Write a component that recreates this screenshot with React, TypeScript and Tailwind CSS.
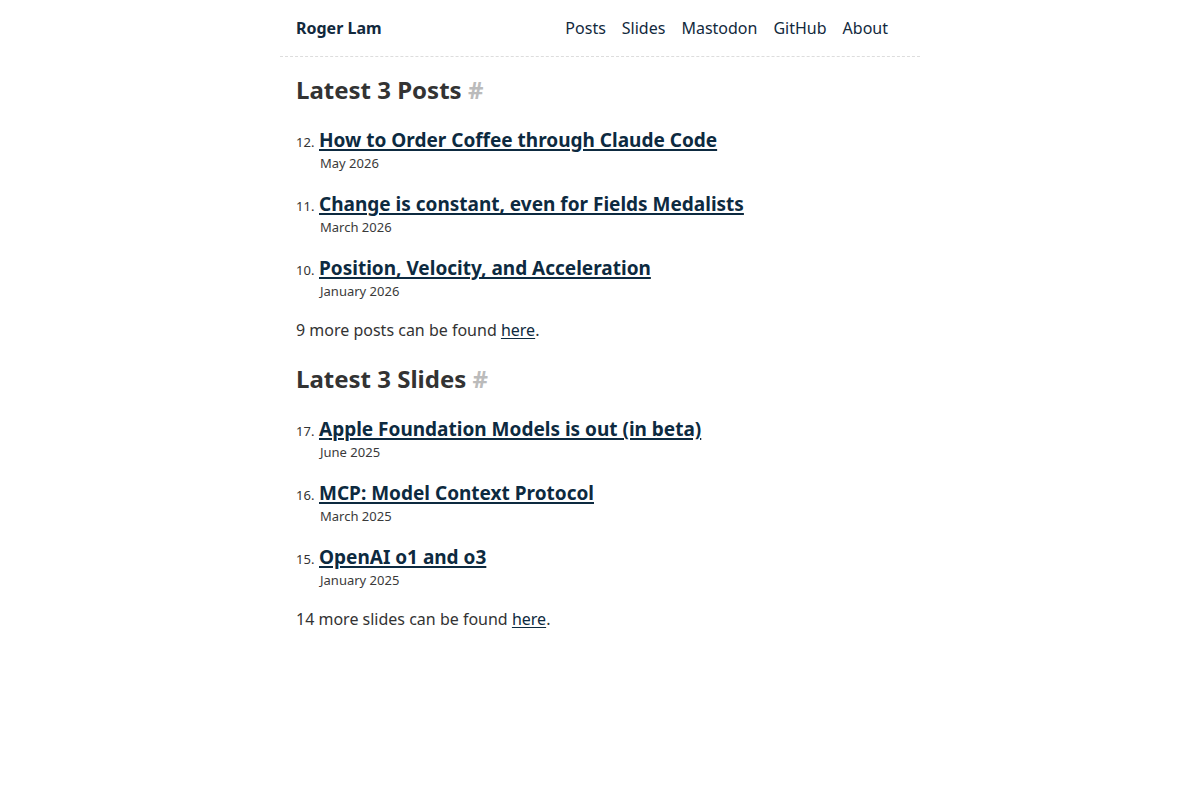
import React from "react";

type Entry = { n: number; title: string; date: string };

const posts: Entry[] = [
  { n: 12, title: "How to Order Coffee through Claude Code", date: "May 2026" },
  { n: 11, title: "Change is constant, even for Fields Medalists", date: "March 2026" },
  { n: 10, title: "Position, Velocity, and Acceleration", date: "January 2026" },
];

const slides: Entry[] = [
  { n: 17, title: "Apple Foundation Models is out (in beta)", date: "June 2025" },
  { n: 16, title: "MCP: Model Context Protocol", date: "March 2025" },
  { n: 15, title: "OpenAI o1 and o3", date: "January 2025" },
];

function Section({ title, items, more }: { title: string; items: Entry[]; more: string }) {
  return (
    <section>
      <h2 className="text-[24px] leading-[32px] font-bold text-[#333333] pt-[17px]">
        {title} <a href="#" className="text-[#bbbbbb] font-bold">#</a>
      </h2>
      <ol className="mt-[20px] flex flex-col gap-[18px]">
        {items.map((e) => (
          <li key={e.n} className="flex flex-col">
            <div className="flex items-baseline">
              <span className="text-[13px] text-[#333333] w-[23px]">{e.n}.</span>
              <a href="#" className="text-[19px] leading-[28px] font-bold text-[#0d2a40] underline underline-offset-[2px] decoration-[1.5px]">
                {e.title}
              </a>
            </div>
            <span className="text-[13px] leading-[18px] text-[#3a3a3a] pl-[24px]">{e.date}</span>
          </li>
        ))}
      </ol>
      <p className="mt-[18px] mb-[4px] text-[16px] leading-[24px] text-[#333333]">
        {more} <a href="#" className="text-[#0d2a40] underline underline-offset-[2px]">here</a>.
      </p>
    </section>
  );
}

export default function App() {
  return (
    <div className="min-h-screen bg-white" style={{ fontFamily: '"Noto Sans", "Open Sans", sans-serif' }}>
      <div className="w-[640px] mx-auto">
        <header className="h-[57px] pl-[16px] pr-[32px] flex items-center justify-between border-b border-dashed border-[#dddddd]">
          <a href="#" className="text-[16px] font-bold text-[#12293d]">Roger Lam</a>
          <nav className="flex gap-[16px] text-[16px] text-[#12293d]">
            <a href="#">Posts</a>
            <a href="#">Slides</a>
            <a href="#">Mastodon</a>
            <a href="#">GitHub</a>
            <a href="#">About</a>
          </nav>
        </header>
        <main className="px-[16px]">
          <Section title="Latest 3 Posts" items={posts} more="9 more posts can be found" />
          <Section title="Latest 3 Slides" items={slides} more="14 more slides can be found" />
        </main>
      </div>
    </div>
  );
}
